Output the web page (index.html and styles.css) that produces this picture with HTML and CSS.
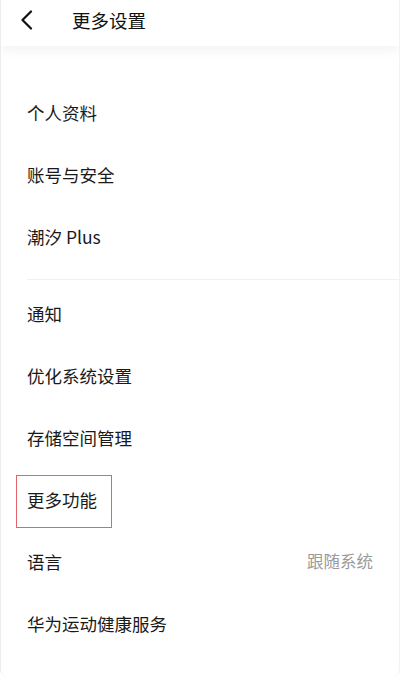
FILE: index.html
```html
<!DOCTYPE html>
<html lang="zh">
<head>
<meta charset="utf-8">
<link rel="stylesheet" href="styles.css">
</head>
<body>
<div class="screen">
  <header class="topbar">
    <svg class="back" width="16" height="20" viewBox="0 0 16 20"><path d="M13 1.5 L4.5 10 L13 18.5" fill="none" stroke="#111" stroke-width="2.2" stroke-linecap="round" stroke-linejoin="round"/></svg>
    <h1 class="title">更多设置</h1>
  </header>
  <main class="list">
    <section class="group first">
      <div class="row">个人资料</div>
      <div class="row">账号与安全</div>
      <div class="row">潮汐 Plus</div>
    </section>
    <div class="divider"></div>
    <section class="group">
      <div class="row">通知</div>
      <div class="row">优化系统设置</div>
      <div class="row">存储空间管理</div>
      <div class="row highlight">更多功能</div>
      <div class="row"><span>语言</span><span class="value">跟随系统</span></div>
      <div class="row">华为运动健康服务</div>
      <div class="row">隐私设置</div>
    </section>
  </main>
</div>
</body>
</html>
```
FILE: styles.css
```css
html, body {
  margin: 0;
  padding: 0;
  background: #fff;
}
body {
  font-family: "Noto Sans CJK SC", "Noto Sans", sans-serif;
  color: #1a1a1a;
}
.screen {
  width: 400px;
  height: 677px;
  overflow: hidden;
  box-sizing: border-box;
  border-left: 1px solid #ececec;
  border-right: 1px solid #f2f2f2;
  border-radius: 0 0 8px 8px;
  background: #fff;
}
.topbar {
  position: relative;
  z-index: 2;
  height: 46px;
  display: flex;
  align-items: center;
  background: #fff;
  box-shadow: 0 6px 10px rgba(0, 0, 0, 0.045);
}
.back {
  margin-left: 17px;
  margin-top: -6px;
}
.title {
  margin: -6px 0 0 38px;
  font-size: 18.5px;
  font-weight: 400;
  color: #111;
}
.list {
  padding-top: 35px;
}
.row {
  height: 62px;
  display: flex;
  align-items: center;
  justify-content: space-between;
  padding: 0 26px 0 26px;
  font-size: 17.5px;
  position: relative;
}
.value {
  font-size: 16.5px;
  color: #9a9a9a;
}
.divider {
  height: 1px;
  background: #f1f1f1;
  margin: 12px 0 2px 26px;
}
.highlight::after {
  content: "";
  position: absolute;
  left: 15px;
  top: 7px;
  width: 96px;
  height: 53px;
  border: 1px solid #e5646a;
  box-sizing: border-box;
}
```
